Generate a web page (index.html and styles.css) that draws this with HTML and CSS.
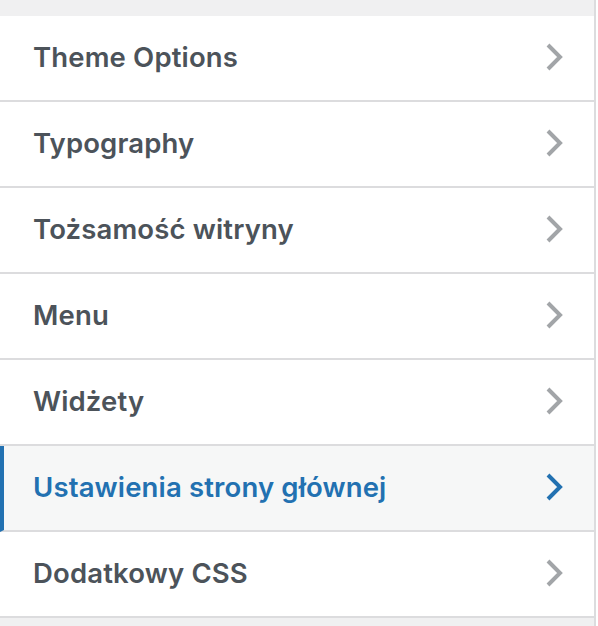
FILE: index.html
```html
<!DOCTYPE html>
<html lang="pl">
<head>
    <meta charset="UTF-8">
    <meta name="viewport" content="width=device-width, initial-scale=1.0">
    <title>Customizer</title>
    <link rel="stylesheet" href="styles.css">
</head>
<body>
    <div class="panel">
        <ul class="section-list">
            <li class="section-item">
                <span class="section-title">Theme Options</span>
                <svg class="chevron" viewBox="0 0 18 28"><polyline points="3,2 15,14 3,26"/></svg>
            </li>
            <li class="section-item">
                <span class="section-title">Typography</span>
                <svg class="chevron" viewBox="0 0 18 28"><polyline points="3,2 15,14 3,26"/></svg>
            </li>
            <li class="section-item">
                <span class="section-title">Tożsamość witryny</span>
                <svg class="chevron" viewBox="0 0 18 28"><polyline points="3,2 15,14 3,26"/></svg>
            </li>
            <li class="section-item">
                <span class="section-title">Menu</span>
                <svg class="chevron" viewBox="0 0 18 28"><polyline points="3,2 15,14 3,26"/></svg>
            </li>
            <li class="section-item">
                <span class="section-title">Widżety</span>
                <svg class="chevron" viewBox="0 0 18 28"><polyline points="3,2 15,14 3,26"/></svg>
            </li>
            <li class="section-item active">
                <span class="section-title">Ustawienia strony głównej</span>
                <svg class="chevron" viewBox="0 0 18 28"><polyline points="3,2 15,14 3,26"/></svg>
            </li>
            <li class="section-item">
                <span class="section-title">Dodatkowy CSS</span>
                <svg class="chevron" viewBox="0 0 18 28"><polyline points="3,2 15,14 3,26"/></svg>
            </li>
        </ul>
    </div>
</body>
</html>
```

FILE: styles.css
```css
* {
    margin: 0;
    padding: 0;
    box-sizing: border-box;
}

body {
    background: #fff;
    font-family: Inter, 'Noto Sans', sans-serif;
    width: 598px;
    height: 626px;
    overflow: hidden;
}

.panel {
    width: 596px;
    height: 626px;
    background: #f0f0f1;
    border-right: 2px solid #dcdcde;
    padding-top: 16px;
}

.section-list {
    list-style: none;
}

.section-item {
    display: flex;
    align-items: center;
    justify-content: space-between;
    height: 86px;
    padding: 0 31px 2px 33px;
    background: #fff;
    border-bottom: 2px solid #dcdcde;
    color: #4c535a;
}

.section-title {
    font-size: 27.5px;
    font-weight: 600;
    letter-spacing: 0.15px;
}

.chevron {
    width: 18px;
    height: 28px;
    fill: none;
    stroke: #a2a5a8;
    stroke-width: 4;
}

.section-item.active {
    background: #f6f7f7;
    color: #2271b1;
    border-left: 4px solid #2271b1;
    padding-left: 29px;
}

.section-item.active .chevron {
    stroke: #2271b1;
}
```
